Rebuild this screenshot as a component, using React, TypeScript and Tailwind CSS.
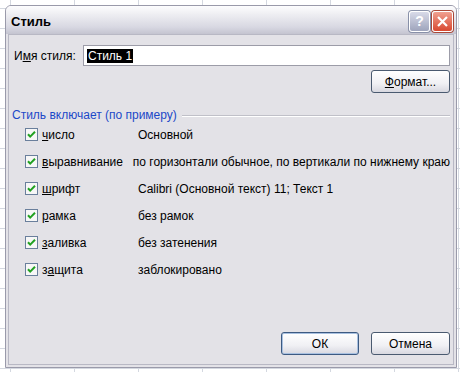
import React from 'react';

const rows: { pre: string; key: string; rest: string; value: string }[] = [
  { pre: '', key: 'ч', rest: 'исло', value: 'Основной' },
  { pre: '', key: 'в', rest: 'ыравнивание', value: 'по горизонтали обычное, по вертикали по нижнему краю' },
  { pre: '', key: 'ш', rest: 'рифт', value: 'Calibri (Основной текст) 11; Текст 1' },
  { pre: '', key: 'р', rest: 'амка', value: 'без рамок' },
  { pre: '', key: 'з', rest: 'аливка', value: 'без затенения' },
  { pre: 'з', key: 'а', rest: 'щита', value: 'заблокировано' },
];

function Check() {
  return (
    <svg width="13" height="13" viewBox="0 0 13 13" className="shrink-0">
      <rect x="0.5" y="0.5" width="12" height="12" fill="#f7f7f7" stroke="#6a7f9c" />
      <path d="M3 6.2 L5.2 8.6 L10 3.8" fill="none" stroke="#21a121" strokeWidth="2" />
    </svg>
  );
}

function XpButton({ children, wide, primary }: { children: React.ReactNode; wide?: boolean; primary?: boolean }) {
  return (
    <div
      className={`flex h-[23px] items-center justify-center rounded-[3px] border bg-[linear-gradient(#ffffff,#f0f0f4_60%,#d8d8e0)] text-[12px] text-black ${
        wide ? 'w-[79px]' : 'w-[78px]'
      } ${primary ? 'border-[#3c5a82] shadow-[inset_0_0_0_1px_#a8c0e0]' : 'border-[#4a5a70]'}`}
    >
      {children}
    </div>
  );
}

export default function App() {
  return (
    <div
      className="relative h-[372px] w-[460px] overflow-hidden bg-white bg-[linear-gradient(#d4d8e0_1px,transparent_1px),linear-gradient(90deg,#d4d8e0_1px,transparent_1px)] bg-[size:64px_20px] bg-[position:10px_8px] pt-[5px] pl-[5px]"
      style={{ fontFamily: '"Liberation Sans", Arial, sans-serif' }}
    >
      <div className="flex h-[363px] w-[452px] flex-col rounded-t-[6px] border border-[#9a9aaa] bg-[#e3e2e7]">
        {/* title bar */}
        <div className="flex h-[28px] items-center justify-between rounded-t-[5px] bg-[linear-gradient(#fdfdfe,#eeeef2_30%,#d8d8e2_75%,#c4c4d0)] pt-[3px] pr-[3px] pl-[5px]">
          <span className="text-[13px] font-bold text-black">Стиль</span>
          <div className="flex gap-[2px]">
            <div className="flex h-[21px] w-[21px] items-center justify-center rounded-[3px] border border-[#ffffff] bg-[linear-gradient(#d8dae8,#9ea4bc)] text-[14px] font-bold text-white shadow-[0_0_0_1px_#8890a8]">
              ?
            </div>
            <div className="flex h-[21px] w-[21px] items-center justify-center rounded-[3px] border border-[#ffffff] bg-[linear-gradient(#f0a090,#d84830)] shadow-[0_0_0_1px_#a84838]">
              <svg width="13" height="13" viewBox="0 0 13 13">
                <path d="M2 2 L11 11 M11 2 L2 11" stroke="#fff" strokeWidth="2.2" />
              </svg>
            </div>
          </div>
        </div>

        {/* body */}
        <div className="mx-[2px] mb-[2px] flex flex-1 flex-col border border-[#b8b8c4] bg-[#e3e2e7] pr-[3px] pl-[5px] text-[12px] text-black">
          <div className="mt-[10px] flex items-center">
            <span className="w-[69px]">
              И<span className="underline">м</span>я стиля:
            </span>
            <div className="flex h-[21px] flex-1 items-center border border-[#9c9ca8] bg-white pl-[3px]">
              <span className="bg-black px-[1px] leading-[14px] text-white">Стиль 1</span>
            </div>
          </div>
          <div className="mt-[4px] flex justify-end">
            <XpButton wide>
              <span className="underline">Ф</span>ормат...
            </XpButton>
          </div>
          <div className="mt-[13px] ml-[-2px] flex items-center gap-[5px]">
            <span className="text-[#1c48c8]">Стиль включает (по примеру)</span>
            <div className="h-px flex-1 bg-[#c0c0c8] shadow-[0_1px_0_#fff]" />
          </div>
          <div className="mt-[-3px] flex flex-col pl-[11px]">
            {rows.map((r) => (
              <div key={r.value} className="flex h-[27px] items-center">
                <Check />
                <span className="ml-[4px] w-[96px]">
                  {r.pre}
                  <span className="underline">{r.key}</span>
                  {r.rest}
                </span>
                <span className="whitespace-nowrap">{r.value}</span>
              </div>
            ))}
          </div>
          <div className="mt-auto mb-[9px] flex justify-end gap-[12px]">
            <XpButton primary>ОК</XpButton>
            <XpButton wide>Отмена</XpButton>
          </div>
        </div>
      </div>
    </div>
  );
}
